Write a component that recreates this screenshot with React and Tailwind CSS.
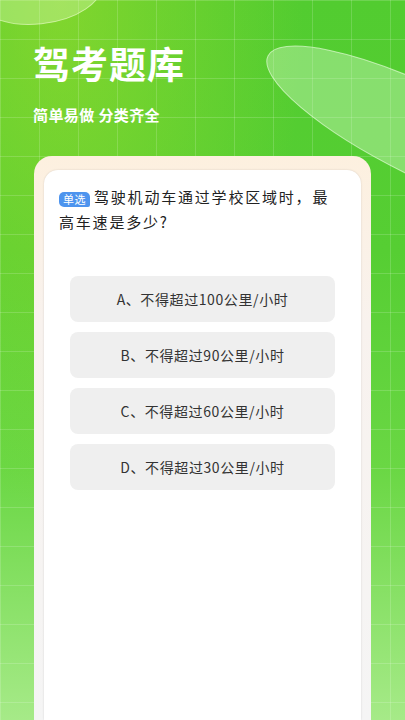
const OPTIONS = ['A、不得超过100公里/小时', 'B、不得超过90公里/小时', 'C、不得超过60公里/小时', 'D、不得超过30公里/小时']

export default function App() {
  return (
    <div
      className="relative flex h-[720px] w-full flex-col overflow-hidden bg-[linear-gradient(180deg,#52cc30_0%,#56ce33_35%,#6ad744_65%,#a6ea88_100%)] font-['Noto_Sans_CJK_SC','Noto_Sans',sans-serif]"
    >
      {/* yellowish glow top-left */}
      <div className="pointer-events-none absolute inset-0 bg-[radial-gradient(ellipse_at_15%_0%,rgba(160,220,44,0.6),transparent_50%)]" />
      {/* grid */}
      <div className="pointer-events-none absolute inset-0 bg-[linear-gradient(rgba(255,255,255,0.16)_1px,transparent_1px),linear-gradient(90deg,rgba(255,255,255,0.16)_1px,transparent_1px)] bg-[size:39px_39px] bg-[position:0px_0px]" />
      {/* blobs */}
      <svg className="pointer-events-none absolute left-0 top-0" width="405" height="200" viewBox="0 0 405 200">
        <ellipse cx="38" cy="-10" rx="64" ry="34" transform="rotate(-6 38 -10)" fill="rgba(230,255,190,0.35)" stroke="rgba(240,255,210,0.6)" strokeWidth="1" />
        <ellipse cx="428" cy="134" rx="178" ry="45" transform="rotate(26 428 134)" fill="rgba(225,255,215,0.37)" stroke="rgba(235,255,225,0.65)" strokeWidth="1" />
      </svg>

      <header className="relative px-[33px] pt-[43px]">
        <h1 className="text-[37px] font-bold leading-[40px] tracking-[1px] text-white">驾考题库</h1>
        <p className="mt-[22px] text-[15px] font-bold leading-[20px] tracking-[0.4px] text-white">简单易做 分类齐全</p>
      </header>

      <div className="relative mx-[34px] mt-[31px] flex flex-1 flex-col rounded-t-[18px] bg-[linear-gradient(180deg,#fdf0df_0%,#f8f2ee_30%,#f5f5f5_100%)] px-[10px] pt-[14px]">
        <div className="flex-1 rounded-t-[14px] bg-white shadow-[0_0_2px_rgba(0,0,0,0.15)]">
          <div className="pl-[15px] pr-[20px] pt-[14px]">
            <p className="text-[15px] leading-[25px] tracking-[1.8px] text-[#222]">
              <span className="mr-[4px] inline-flex h-[15px] items-center rounded-[5px] rounded-br-[2px] bg-[#4d94ee] px-[4px] align-[-1px] text-[11px] leading-none tracking-[0.5px] text-white">
                单选
              </span>
              驾驶机动车通过学校区域时，最高车速是多少?
            </p>
          </div>
          <div className="mt-[42px] flex flex-col gap-[10px] px-[26px]">
            {OPTIONS.map((o) => (
              <div
                key={o}
                className="flex h-[46px] items-center justify-center rounded-[8px] bg-[#efefef] text-[14px] tracking-[0.6px] text-[#333]"
              >
                {o}
              </div>
            ))}
          </div>
        </div>
      </div>
    </div>
  )
}
